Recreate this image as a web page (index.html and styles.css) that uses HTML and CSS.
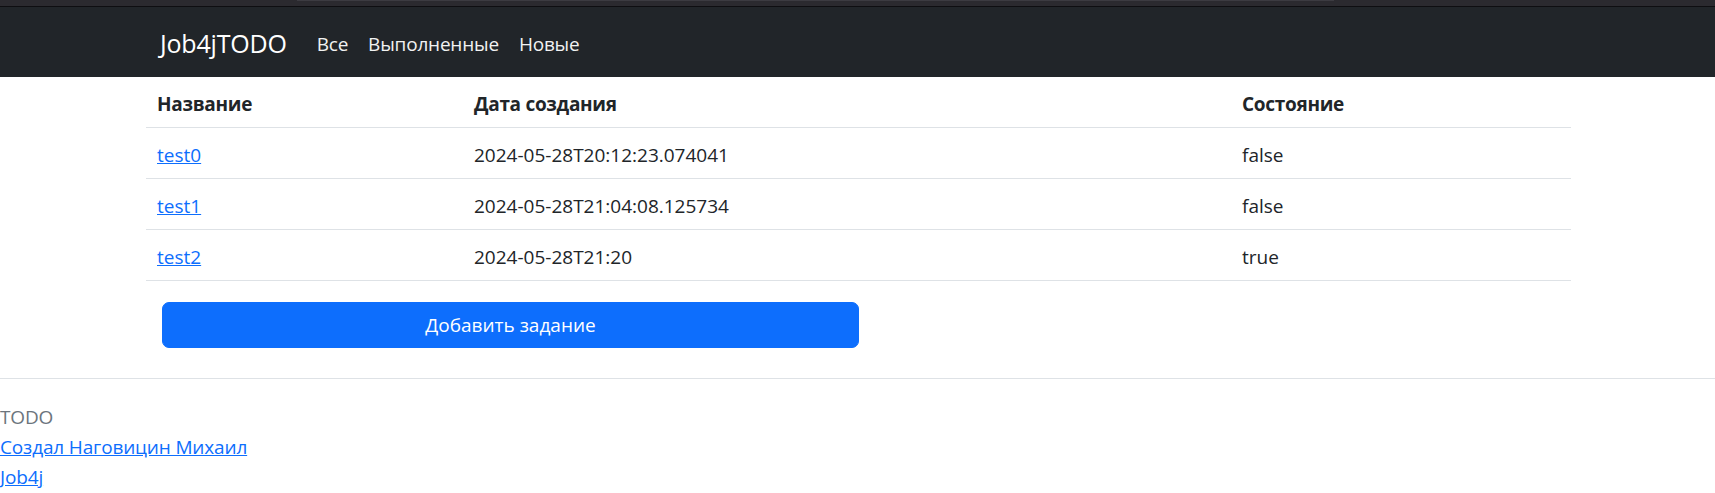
FILE: index.html
```html
<!DOCTYPE html>
<html lang="ru">
<head>
<meta charset="utf-8">
<title>Job4jTODO</title>
<link rel="stylesheet" href="styles.css">
</head>
<body>
<div class="topstrip"><div class="topstrip-bar"></div></div>
<nav class="navbar">
  <div class="nav-container">
    <a class="brand" href="#">Job4jTODO</a>
    <ul class="nav-links">
      <li><a class="nav-link" href="#">Все</a></li>
      <li><a class="nav-link" href="#">Выполненные</a></li>
      <li><a class="nav-link" href="#">Новые</a></li>
    </ul>
  </div>
</nav>
<main class="main">
  <table class="tasks">
    <thead>
      <tr><th class="col-name">Название</th><th class="col-date">Дата создания</th><th class="col-state">Состояние</th></tr>
    </thead>
    <tbody>
      <tr><td><a href="#">test0</a></td><td>2024-05-28T20:12:23.074041</td><td>false</td></tr>
      <tr><td><a href="#">test1</a></td><td>2024-05-28T21:04:08.125734</td><td>false</td></tr>
      <tr><td><a href="#">test2</a></td><td>2024-05-28T21:20</td><td>true</td></tr>
    </tbody>
  </table>
  <div class="actions">
    <button class="btn-primary" type="button">Добавить задание</button>
  </div>
</main>
<footer class="footer">
  <div class="footer-title">TODO</div>
  <div><a href="#">Создал Наговицин Михаил</a></div>
  <div><a href="#">Job4j</a></div>
</footer>
</body>
</html>
```
FILE: styles.css
```css
html, body {
  margin: 0;
  padding: 0;
}
body {
  font-family: "Open Sans", "Noto Sans", sans-serif;
  font-size: 20px;
  line-height: 30px;
  color: #212529;
  background: #fff;
}
a {
  color: #0d6efd;
  text-decoration: underline;
}
.topstrip {
  height: 6px;
  background: #2b2a2f;
  border-bottom: 1px solid #0e0e11;
  display: flex;
  justify-content: center;
}
.topstrip-bar {
  width: 1037px;
  height: 1px;
  background: #3c3b41;
  margin-left: -85px;
}
.navbar {
  background: #212529;
  height: 70px;
}
.nav-container {
  width: 1425px;
  margin: 0 auto;
  padding: 3px 15px 0;
  box-sizing: border-box;
  height: 100%;
  display: flex;
  align-items: center;
}
.brand {
  color: #fff;
  font-size: 25px;
  line-height: 37px;
  text-decoration: none;
  margin-right: 20px;
  letter-spacing: -0.2px;
}
.nav-links {
  list-style: none;
  margin: 0;
  padding: 0;
  display: flex;
}
.nav-link {
  display: block;
  padding: 10px 10px;
  color: #f2f2f2;
  text-decoration: none;
  font-size: 19px;
  letter-spacing: -0.2px;
}
.main {
  width: 1425px;
  margin: 0 auto;
  padding-bottom: 30px;
  position: relative;
  left: 1px;
}
.tasks {
  width: 100%;
  border-collapse: collapse;
  font-size: 19px;
}
.tasks th, .tasks td {
  text-align: left;
  padding: 12px 10px 8px 11px;
  border-bottom: 1px solid #dee2e6;
  height: 30px;
  vertical-align: middle;
}
.tasks th {
  font-weight: 700;
  letter-spacing: -0.3px;
}
.col-name { width: 296px; }
.col-date { width: 747px; }
.col-state { width: auto; }
.actions {
  padding: 21px 0 0 16px;
}
.btn-primary {
  display: block;
  width: 697px;
  height: 46px;
  background: #0d6efd;
  color: #fff;
  border: 1px solid #0d6efd;
  border-radius: 7px;
  font-family: inherit;
  font-size: 19px;
  line-height: 28px;
  padding: 0;
  cursor: pointer;
}
.footer {
  border-top: 1px solid #dee2e6;
  padding-top: 23px;
  font-size: 19px;
  letter-spacing: -0.15px;
}
.footer-title {
  color: #6c757d;
}
```
